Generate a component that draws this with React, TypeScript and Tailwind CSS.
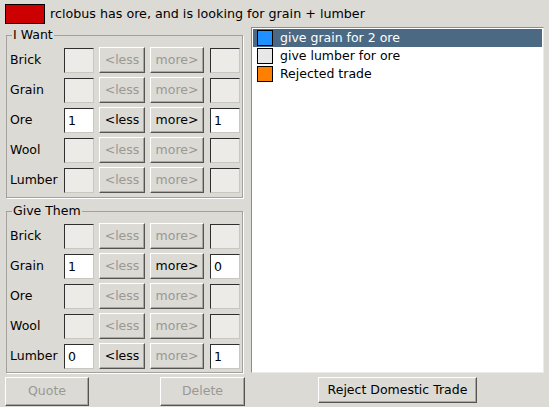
import React from "react";
import clsx from "clsx";

type Row = { name: string; left?: string; right?: string; less: boolean; more: boolean };

const WANT: Row[] = [
  { name: "Brick", less: false, more: false },
  { name: "Grain", less: false, more: false },
  { name: "Ore", left: "1", right: "1", less: true, more: true },
  { name: "Wool", less: false, more: false },
  { name: "Lumber", less: false, more: false },
];

const GIVE: Row[] = [
  { name: "Brick", less: false, more: false },
  { name: "Grain", left: "1", right: "0", less: false, more: true },
  { name: "Ore", less: false, more: false },
  { name: "Wool", less: false, more: false },
  { name: "Lumber", left: "0", right: "1", less: true, more: false },
];

const OFFERS = [
  { text: "give grain for 2 ore", color: "bg-[#1e90ff]", selected: true },
  { text: "give lumber for ore", color: "bg-[#e8e8e8]", selected: false },
  { text: "Rejected trade", color: "bg-[#ff8000]", selected: false },
];

function Field({ value }: { value?: string }) {
  return (
    <div
      className={clsx(
        "w-[30px] h-[25px] border border-t-[#2f2f2f] border-l-[#2f2f2f] border-b-[#c9c7c2] border-r-[#c9c7c2] pl-[3px] leading-[23px]",
        value === undefined ? "bg-[#edebe7]" : "bg-white"
      )}
    >
      {value}
    </div>
  );
}

function Btn({ label, enabled, className }: { label: string; enabled: boolean; className?: string }) {
  return (
    <div
      className={clsx(
        "flex items-center justify-center bg-[#dcdad5] border border-t-white border-l-white border-b-[#555451] border-r-[#555451] shadow-[inset_-1px_-1px_0_#a8a6a1]",
        enabled ? "text-black" : "text-[#9a9893]",
        className
      )}
    >
      {label}
    </div>
  );
}

function Group({ title, rows, className }: { title: string; rows: Row[]; className?: string }) {
  return (
    <fieldset
      className={clsx(
        "ml-[1px] mr-[2px] border border-[#a3a19d] shadow-[1px_1px_0_white] pl-[3px] pr-[2px] pt-[4px]",
        className
      )}
    >
      <legend className="ml-[2px] px-[1px] leading-[16px]">{title}</legend>
      <div className="flex flex-col gap-[4px]">
        {rows.map((r) => (
          <div key={r.name} className="flex items-center h-[26px]">
            <span className="w-[54px]">{r.name}</span>
            <Field value={r.left} />
            <Btn label="<less" enabled={r.less} className="ml-[5px] w-[46px] h-[26px]" />
            <Btn label="more>" enabled={r.more} className="ml-[5px] w-[54px] h-[26px]" />
            <div className="ml-[6px]">
              <Field value={r.right} />
            </div>
          </div>
        ))}
      </div>
    </fieldset>
  );
}

export default function App() {
  return (
    <div className="w-[549px] h-[407px] bg-[#dcdad5] flex flex-col font-['DejaVu_Sans',sans-serif] text-[12.5px] text-black overflow-hidden">
      <div className="h-[27px] flex items-start pt-[4px] pl-[5px]">
        <div className="w-[40px] h-[20px] bg-[#cc0000] border border-black" />
        <span className="ml-[5px] leading-[20px] text-[12.7px]">rclobus has ore, and is looking for grain + lumber</span>
      </div>
      <div className="flex flex-1 pl-[5px] pr-[5px]">
        <div className="w-[240px] flex flex-col">
          <Group title="I Want" rows={WANT} className="pb-[4px]" />
          <Group title="Give Them" rows={GIVE} className="mt-[5px] pb-[3px]" />
          <div className="flex justify-between mt-[4px]">
            <Btn label="Quote" enabled={false} className="w-[84px] h-[29px]" />
            <Btn label="Delete" enabled={false} className="w-[85px] h-[29px]" />
          </div>
        </div>
        <div className="ml-[6px] flex-1 flex flex-col">
          <div className="h-[346px] bg-white border border-t-[#8e8c88] border-l-[#8e8c88] border-b-[#ecebe8] border-r-[#ecebe8] p-[1px]">
            {OFFERS.map((o) => (
              <div
                key={o.text}
                className={clsx(
                  "h-[18px] flex items-center pl-[4px]",
                  o.selected ? "bg-[#4b6983] text-white" : "text-black"
                )}
              >
                <div className={clsx("w-[16px] h-[16px] border border-black", o.color)} />
                <span className="ml-[7px]">{o.text}</span>
              </div>
            ))}
          </div>
          <div className="flex justify-center mt-[4px]">
            <Btn label="Reject Domestic Trade" enabled className="w-[159px] h-[26px]" />
          </div>
        </div>
      </div>
    </div>
  );
}
